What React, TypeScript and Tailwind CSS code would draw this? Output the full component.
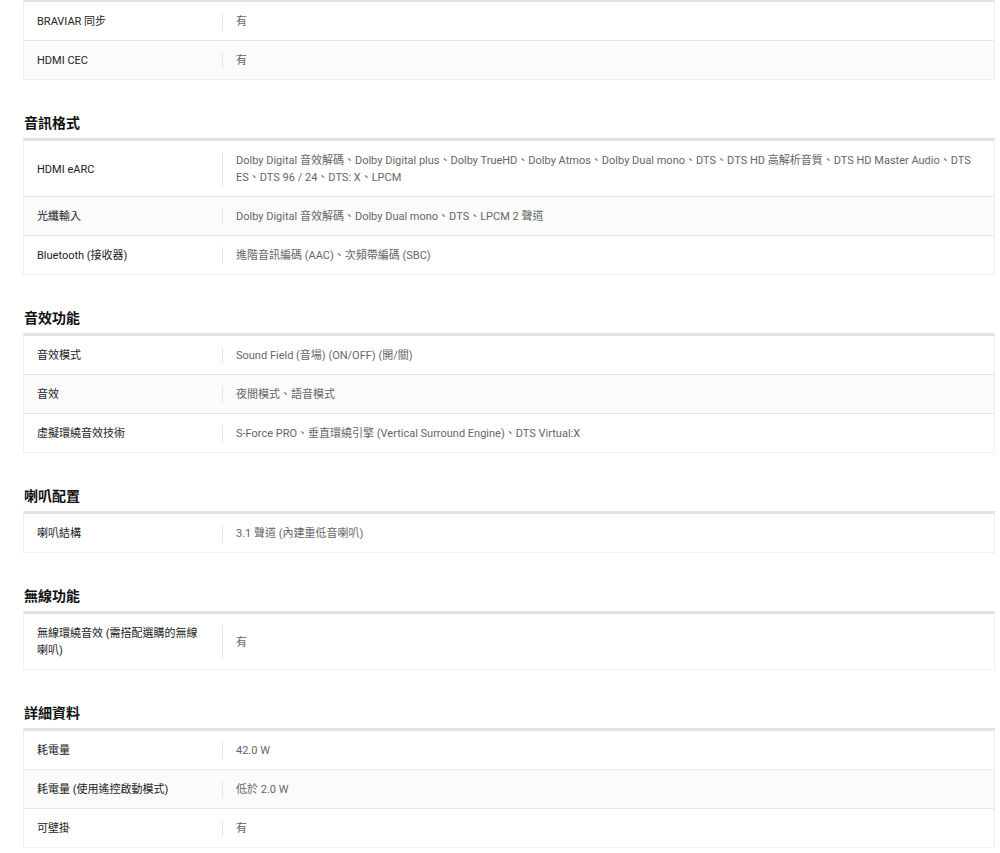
import React from "react";

type Row = { label: string; value: string };
type Section = { title?: string; rows: Row[] };

const sections: Section[] = [
  {
    rows: [
      { label: "BRAVIAR 同步", value: "有" },
      { label: "HDMI CEC", value: "有" },
    ],
  },
  {
    title: "音訊格式",
    rows: [
      {
        label: "HDMI eARC",
        value:
          "Dolby Digital 音效解碼、Dolby Digital plus、Dolby TrueHD、Dolby Atmos、Dolby Dual mono、DTS、DTS HD 高解析音質、DTS HD Master Audio、DTS ES、DTS 96 / 24、DTS: X、LPCM",
      },
      { label: "光纖輸入", value: "Dolby Digital 音效解碼、Dolby Dual mono、DTS、LPCM 2 聲道" },
      { label: "Bluetooth (接收器)", value: "進階音訊編碼 (AAC)、次頻帶編碼 (SBC)" },
    ],
  },
  {
    title: "音效功能",
    rows: [
      { label: "音效模式", value: "Sound Field (音場) (ON/OFF) (開/關)" },
      { label: "音效", value: "夜間模式、語音模式" },
      { label: "虛擬環繞音效技術", value: "S-Force PRO、垂直環繞引擎 (Vertical Surround Engine)、DTS Virtual:X" },
    ],
  },
  {
    title: "喇叭配置",
    rows: [{ label: "喇叭結構", value: "3.1 聲道 (內建重低音喇叭)" }],
  },
  {
    title: "無線功能",
    rows: [{ label: "無線環繞音效 (需搭配選購的無線喇叭)", value: "有" }],
  },
  {
    title: "詳細資料",
    rows: [
      { label: "耗電量", value: "42.0 W" },
      { label: "耗電量 (使用遙控啟動模式)", value: "低於 2.0 W" },
      { label: "可壁掛", value: "有" },
    ],
  },
];

function Table({ rows, first }: { rows: Row[]; first?: boolean }) {
  return (
    <div
      className={
        "border-x border-b border-[#f0f0f0] " +
        (first ? "border-t-2 border-t-[#e4e4e4]" : "border-t-[3px] border-t-[#e2e2e2]")
      }
    >
      {rows.map((r, i) => (
        <div
          key={i}
          className={
            "flex items-stretch pt-[11px] pb-[10px] " +
            (i < rows.length - 1 ? "border-b border-[#e6e6e6] " : "") +
            (i % 2 === 1 ? "bg-[#fbfbfb]" : "bg-white")
          }
        >
          <div className="w-[198px] shrink-0 pl-[13px] pr-[15px] flex items-center text-[11px] leading-[17px] text-[#222]">
            {r.label}
          </div>
          <div className="flex-1 border-l border-[#e6e6e6] pl-[13px] pr-[14px] flex items-center text-[11px] leading-[17px] text-[#666]">
            {r.value}
          </div>
        </div>
      ))}
    </div>
  );
}

export default function App() {
  return (
    <div
      className="bg-white min-h-[853px] pl-[23px] pr-[5px]"
      style={{ fontFamily: 'Roboto, "Noto Sans CJK TC", sans-serif' }}
    >
      {sections.map((s, i) => (
        <div key={i} className={s.title ? "mt-[33px]" : ""}>
          {s.title && (
            <div className="h-[20px] leading-[20px] text-[14px] font-bold text-[#111] mb-[5px] pl-px">
              {s.title}
            </div>
          )}
          <Table rows={s.rows} first={!s.title} />
        </div>
      ))}
    </div>
  );
}
